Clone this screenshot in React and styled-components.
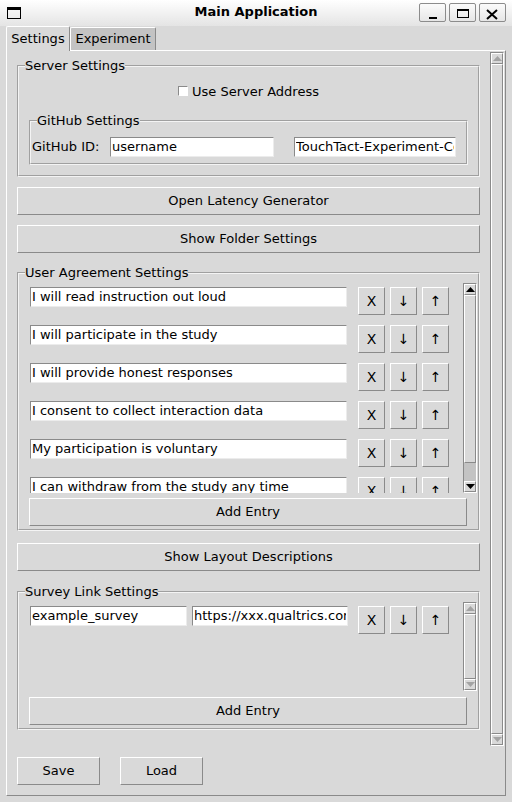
import React from 'react';
import styled, { createGlobalStyle } from 'styled-components';

const BG = '#d9d9d9';
const LIGHT = '#ffffff';
const DARK = '#8a8a8a';
const TROUGH = '#c3c3c3';

const agreements = [
  'I will read instruction out loud',
  'I will participate in the study',
  'I will provide honest responses',
  'I consent to collect interaction data',
  'My participation is voluntary',
  'I can withdraw from the study any time',
];

const surveys = [
  { name: 'example_survey', url: 'https://xxx.qualtrics.com/jfe/form/SV_example' },
];

function App() {
  return (
    <Window>
      <GlobalStyle />
      <TitleBar>
        <TitleIcon>
          <svg width="14" height="12" viewBox="0 0 14 12">
            <rect x="0.5" y="0.5" width="13" height="11" fill="none" stroke="#000" />
            <rect x="0" y="0" width="14" height="3" fill="#000" />
          </svg>
        </TitleIcon>
        <Title>Main Application</Title>
        <WinButtons>
          <WinButton>
            <svg width="25" height="17" viewBox="0 0 25 17">
              <rect x="9" y="13" width="8" height="2" fill="#000" />
            </svg>
          </WinButton>
          <WinButton>
            <svg width="25" height="17" viewBox="0 0 25 17">
              <rect x="7.5" y="5.5" width="11" height="8" fill="none" stroke="#000" />
              <rect x="7" y="5" width="12" height="2" fill="#000" />
            </svg>
          </WinButton>
          <WinButton>
            <svg width="25" height="17" viewBox="0 0 25 17">
              <path d="M7 6 L17 15 M17 6 L7 15" stroke="#000" strokeWidth="2" />
            </svg>
          </WinButton>
        </WinButtons>
      </TitleBar>

      <Body>
        <TabBar>
          <Tab active width={64}>Settings</Tab>
          <Tab width={86}>Experiment</Tab>
        </TabBar>

        <Pane>
          <CanvasRow>
            <Content>
              <Group top={7} pad="0 10px 10px 10px">
                <Caption indent={-4}>Server Settings</Caption>
                <CheckRow>
                  <CheckBox type="checkbox" readOnly />
                  <span>Use Server Address</span>
                </CheckRow>
                <Group top={13} pad="0 10px 6px 1px">
                  <Caption indent={5}>GitHub Settings</Caption>
                  <FieldRow>
                    <FieldLabel>GitHub ID:</FieldLabel>
                    <Fields gap={20}>
                      <Entry width={164} readOnly value="username" />
                      <Entry width={162} readOnly value="TouchTact-Experiment-Config" />
                    </Fields>
                  </FieldRow>
                </Group>
              </Group>

              <WideButton top={10}>Open Latency Generator</WideButton>
              <WideButton top={10}>Show Folder Settings</WideButton>

              <Group top={13} pad="3px 1px 3px 10px">
                <Caption indent={-4}>User Agreement Settings</Caption>
                <ListArea>
                  <ListCanvas height={210}>
                    {agreements.map((text) => (
                      <ListRow key={text}>
                        <Fields gap={5} width={328}>
                          <Entry width={317} readOnly value={text} />
                        </Fields>
                        <EntryButtons />
                      </ListRow>
                    ))}
                  </ListCanvas>
                  <Scrollbar height={210} active thumb={0.9} />
                </ListArea>
                <WideButton top={5} inset={10}>Add Entry</WideButton>
              </Group>

              <WideButton top={12}>Show Layout Descriptions</WideButton>

              <Group top={14} pad="3px 1px 3px 10px">
                <Caption indent={-4}>Survey Link Settings</Caption>
                <ListArea>
                  <ListCanvas height={89}>
                    {surveys.map((s) => (
                      <ListRow key={s.name}>
                        <Fields gap={5} width={328}>
                          <Entry width={157} readOnly value={s.name} />
                          <Entry width={156} readOnly value={s.url} />
                        </Fields>
                        <EntryButtons />
                      </ListRow>
                    ))}
                  </ListCanvas>
                  <Scrollbar height={89} thumb={1} />
                </ListArea>
                <WideButton top={6} inset={10}>Add Entry</WideButton>
              </Group>
            </Content>
            <Scrollbar height={694} thumb={1} />
          </CanvasRow>

          <Footer>
            <SmallButton>Save</SmallButton>
            <SmallButton>Load</SmallButton>
          </Footer>
        </Pane>
      </Body>
    </Window>
  );
}

function EntryButtons() {
  return (
    <RowButtons>
      <RowButton>X</RowButton>
      <RowButton>↓</RowButton>
      <RowButton>↑</RowButton>
    </RowButtons>
  );
}

function Arrow({ down, active }) {
  return (
    <ArrowBox>
      <svg width="9" height="5" viewBox="0 0 9 5">
        <polygon
          points={down ? '0,0 9,0 4.5,5' : '0,5 9,5 4.5,0'}
          fill={active ? '#000' : '#a3a3a3'}
        />
      </svg>
    </ArrowBox>
  );
}

function Scrollbar({ height, thumb, active }) {
  return (
    <Track height={height}>
      <Arrow active={active} />
      <Thumb grow={thumb} />
      <TroughGap grow={1 - thumb} />
      <Arrow down active={active} />
    </Track>
  );
}

export default App;

const GlobalStyle = createGlobalStyle`
  html, body {
    margin: 0;
    padding: 0;
  }
  body {
    background: ${BG};
    font-family: 'DejaVu Sans', 'Liberation Sans', sans-serif;
    font-size: 13px;
    color: #000;
  }
  * {
    box-sizing: border-box;
  }
`;

const Window = styled.div`
  width: 512px;
  height: 802px;
  display: flex;
  flex-direction: column;
  overflow: hidden;
  background: ${BG};
`;

const TitleBar = styled.div`
  height: 26px;
  flex: none;
  display: grid;
  grid-template-columns: 1fr auto 1fr;
  align-items: start;
  background: linear-gradient(#ffffff, #e4e4e4);
`;

const TitleIcon = styled.div`
  padding: 7px 0 0 7px;
  line-height: 0;
`;

const Title = styled.div`
  font-weight: bold;
  font-size: 13px;
  line-height: 16px;
  padding-top: 4px;
`;

const WinButtons = styled.div`
  display: flex;
  justify-content: flex-end;
  gap: 3px;
  padding: 3px 6px 0 0;
`;

const WinButton = styled.div`
  width: 27px;
  height: 19px;
  border: 1px solid #8c8c8c;
  border-radius: 2px;
  background: linear-gradient(#fbfbfb, #e6e6e6);
  line-height: 0;
`;

const Body = styled.div`
  flex: 1;
  display: flex;
  flex-direction: column;
  padding: 0 6px 6px 6px;
`;

const TabBar = styled.div`
  height: 24px;
  display: flex;
  align-items: flex-end;
`;

const Tab = styled.div`
  position: relative;
  z-index: ${(p) => (p.active ? 1 : 0)};
  width: ${(p) => p.width}px;
  height: ${(p) => (p.active ? 25 : 23)}px;
  margin-bottom: ${(p) => (p.active ? -1 : 0)}px;
  padding-bottom: ${(p) => (p.active ? 2 : 1)}px;
  display: flex;
  align-items: center;
  justify-content: center;
  background: ${(p) => (p.active ? BG : TROUGH)};
  border: 1px solid;
  border-bottom: none;
  border-color: ${LIGHT} ${DARK} ${DARK} ${LIGHT};
  border-radius: 2px 2px 0 0;
`;

const Pane = styled.div`
  height: 746px;
  display: flex;
  flex-direction: column;
  border: 1px solid;
  border-color: ${LIGHT} ${DARK} ${DARK} ${LIGHT};
  padding: 1px 1px 10px 0;
`;

const CanvasRow = styled.div`
  height: 694px;
  flex: none;
  display: flex;
`;

const Content = styled.div`
  flex: 1;
  min-width: 0;
  display: flex;
  flex-direction: column;
  padding: 0 10px;
  overflow: hidden;
`;

const Group = styled.fieldset`
  margin: ${(p) => p.top}px 0 0 0;
  padding: ${(p) => p.pad};
  border: 2px groove #f4f4f4;
  min-width: 0;
`;

const Caption = styled.legend`
  padding: 0 0 1px 0;
  margin-left: ${(p) => p.indent}px;
  line-height: 13px;
`;

const CheckRow = styled.div`
  height: 20px;
  margin-top: 8px;
  display: flex;
  align-items: center;
  justify-content: center;
  gap: 4px;
`;

const CheckBox = styled.input`
  appearance: none;
  margin: 0;
  width: 10px;
  height: 10px;
  background: #fff;
  border: 1px solid;
  border-color: ${DARK} ${LIGHT} ${LIGHT} ${DARK};
`;

const FieldRow = styled.div`
  margin-top: 9px;
  display: flex;
  align-items: center;
`;

const FieldLabel = styled.span`
  width: 78px;
  flex: none;
  white-space: nowrap;
  padding-bottom: 1px;
`;

const Fields = styled.div`
  width: ${(p) => (p.width ? `${p.width}px` : 'auto')};
  flex: none;
  display: flex;
  gap: ${(p) => p.gap}px;
`;

const Entry = styled.input`
  width: ${(p) => p.width}px;
  height: 20px;
  flex: none;
  margin: 0;
  padding: 0 1px 2px 1px;
  font: inherit;
  color: #000;
  background: #fff;
  border: 1px solid;
  border-color: ${DARK} #ececec #ececec ${DARK};
  outline: none;
`;

const Raised = styled.div`
  display: flex;
  align-items: center;
  justify-content: center;
  height: 28px;
  flex: none;
  padding-bottom: 2px;
  background: ${BG};
  border: 1px solid;
  border-color: ${LIGHT} ${DARK} ${DARK} ${LIGHT};
`;

const WideButton = styled(Raised)`
  margin-top: ${(p) => p.top}px;
  margin-right: ${(p) => p.inset || 0}px;
`;

const ListArea = styled.div`
  display: flex;
`;

const ListCanvas = styled.div`
  flex: 1;
  height: ${(p) => p.height}px;
  overflow: hidden;
  padding: 4px 0 0 1px;
`;

const ListRow = styled.div`
  display: flex;
  align-items: flex-start;
  margin-bottom: 10px;
`;

const RowButtons = styled.div`
  display: flex;
  gap: 5px;
`;

const RowButton = styled(Raised)`
  width: 27px;
  font-size: 14px;
  padding-bottom: 0;
`;

const Track = styled.div`
  width: 14px;
  height: ${(p) => p.height}px;
  flex: none;
  display: flex;
  flex-direction: column;
  background: ${TROUGH};
  border: 1px solid;
  border-color: ${DARK} ${LIGHT} ${LIGHT} ${DARK};
`;

const ArrowBox = styled.div`
  height: 11px;
  flex: none;
  display: flex;
  align-items: center;
  justify-content: center;
  background: ${BG};
  border: 1px solid;
  border-color: ${LIGHT} ${DARK} ${DARK} ${LIGHT};
  line-height: 0;
`;

const Thumb = styled.div`
  flex: ${(p) => p.grow};
  background: ${BG};
  border: 1px solid;
  border-color: ${LIGHT} ${DARK} ${DARK} ${LIGHT};
`;

const TroughGap = styled.div`
  flex: ${(p) => p.grow};
`;

const Footer = styled.div`
  margin-top: 11px;
  padding-left: 10px;
  display: flex;
  gap: 20px;
`;

const SmallButton = styled(Raised)`
  width: 83px;
`;
